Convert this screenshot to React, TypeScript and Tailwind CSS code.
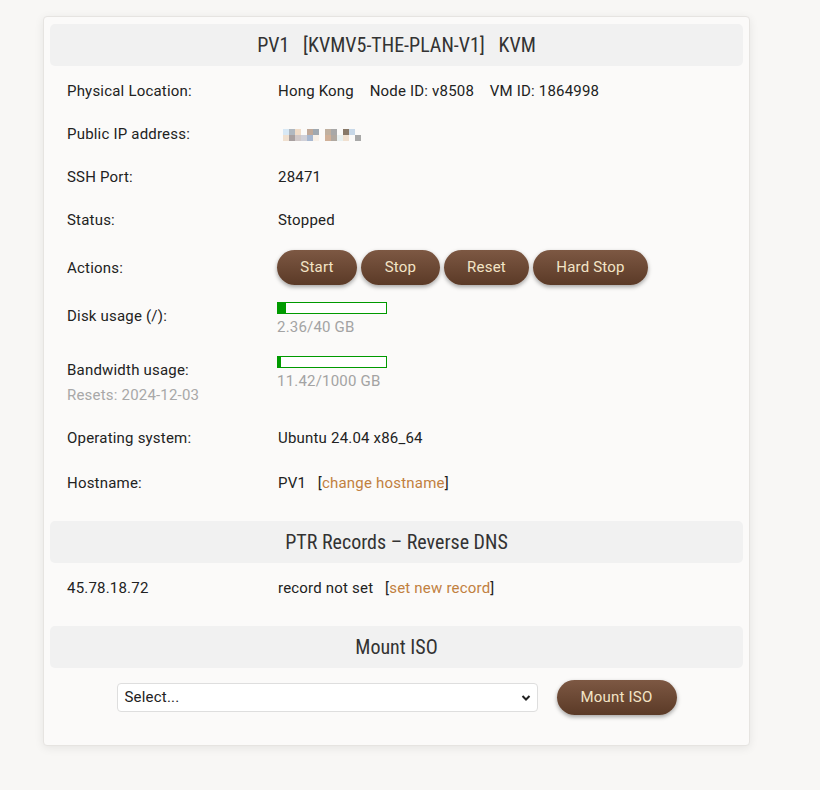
import React from "react";

const body = { fontFamily: "Roboto, 'Noto Sans', sans-serif" };
const cond = { fontFamily: "Roboto, 'DejaVu Sans Condensed', sans-serif", fontStretch: "82%" };

function Header({ children }: { children: React.ReactNode }) {
  return (
    <div className="h-[42px] bg-[#f1f1f1] rounded-[5px] flex items-center justify-center text-[20px] text-[#333] tracking-normal" style={cond}>
      {children}
    </div>
  );
}

function Btn({ label, w }: { label: string; w: string }) {
  return (
    <button
      className={`${w} h-[35px] rounded-full bg-gradient-to-b from-[#7d5843] to-[#5b3a27] text-[#f3e4c6] text-[15px] shadow-[0_2px_4px_rgba(0,0,0,0.35)] flex items-center justify-center`}
    >
      {label}
    </button>
  );
}

const ipRow1 = ["#d8e8f5", "#b0b8c0", "#f0dcc8", "transparent", "#c0a898", "#a0a8b0", "transparent", "#c0b0a0", "#a8a8a8", "transparent", "#887868", "#c8d8e8", "transparent"];
const ipRow2 = ["#f0e0d0", "#a8a0a0", "#d0c8c8", "#d0d0d8", "#a8b8d0", "#f8f0e8", "transparent", "#d0b098", "#b0a8a0", "#e8f0f0", "#f0e0d0", "transparent", "#a8a8a8"];

function Bar({ fill }: { fill: string }) {
  return (
    <div className="w-[110px] h-[12px] border border-[#009a00] bg-white">
      <div className={`h-full bg-[#009a00] ${fill}`} />
    </div>
  );
}

export default function App() {
  return (
    <div className="min-h-[790px] bg-[#f8f7f5] pt-[16px] pl-[43px]" style={body}>
      <div className="w-[707px] bg-[#fbfaf9] border border-[#e6e4e1] rounded-[4px] shadow-[0_2px_10px_rgba(0,0,0,0.08)] px-[6px] pt-[7px] pb-[30px] text-[15px] text-[#222] tracking-[0.2px]">
        <Header>
          <span className="whitespace-pre">PV1   [KVMV5-THE-PLAN-V1]   KVM</span>
        </Header>

        <div className="pl-[17px] pt-[4px]">
          <div className="flex h-[43px] items-center">
            <div className="w-[211px]">Physical Location:</div>
            <div className="whitespace-pre">Hong Kong    Node ID: v8508    VM ID: 1864998</div>
          </div>
          <div className="flex h-[43px] items-center">
            <div className="w-[211px]">Public IP address:</div>
            <div className="flex flex-col pl-[5px]">
              <div className="flex">
                {ipRow1.map((c, i) => (
                  <div key={i} className="w-[6px] h-[6px]" style={{ background: c }} />
                ))}
              </div>
              <div className="flex">
                {ipRow2.map((c, i) => (
                  <div key={i} className="w-[6px] h-[6px]" style={{ background: c }} />
                ))}
              </div>
            </div>
          </div>
          <div className="flex h-[43px] items-center">
            <div className="w-[211px]">SSH Port:</div>
            <div>28471</div>
          </div>
          <div className="flex h-[43px] items-center">
            <div className="w-[211px]">Status:</div>
            <div>Stopped</div>
          </div>
          <div className="flex h-[52px] items-center">
            <div className="w-[210px]">Actions:</div>
            <div className="flex gap-[4px] -mt-[2px]">
              <Btn label="Start" w="w-[80px]" />
              <Btn label="Stop" w="w-[79px]" />
              <Btn label="Reset" w="w-[85px]" />
              <Btn label="Hard Stop" w="w-[115px]" />
            </div>
          </div>
          <div className="flex h-[51px] items-start">
            <div className="w-[210px] pt-[12px] leading-[20px]">Disk usage (/):</div>
            <div className="pt-[8px]">
              <Bar fill="w-[8px]" />
              <div className="text-[#a3a3a3] leading-[24px] mt-[1px]">2.36/40 GB</div>
            </div>
          </div>
          <div className="flex h-[71px] items-start">
            <div className="w-[210px] pt-[15px] leading-[20px]">
              <div>Bandwidth usage:</div>
              <div className="text-[#a8a8a8] mt-[5px]">Resets: 2024-12-03</div>
            </div>
            <div className="pt-[11px]">
              <Bar fill="w-[3px]" />
              <div className="text-[#a3a3a3] leading-[24px] mt-[1px]">11.42/1000 GB</div>
            </div>
          </div>
          <div className="flex h-[44px] items-center">
            <div className="w-[211px]">Operating system:</div>
            <div>Ubuntu 24.04 x86_64</div>
          </div>
          <div className="flex h-[46px] items-center">
            <div className="w-[211px]">Hostname:</div>
            <div className="whitespace-pre">
              PV1   [<span className="text-[#c1803f]">change hostname</span>]
            </div>
          </div>
        </div>

        <div className="mt-[15px]">
          <Header>PTR Records – Reverse DNS</Header>
        </div>
        <div className="pl-[17px] pt-[2px] flex h-[49px] items-center">
          <div className="w-[211px]">45.78.18.72</div>
          <div className="whitespace-pre">
            record not set   [<span className="text-[#c1803f]">set new record</span>]
          </div>
        </div>

        <div className="mt-[14px]">
          <Header>Mount ISO</Header>
        </div>
        <div className="flex justify-center items-center gap-[19px] mt-[12px]">
          <div className="relative w-[421px] h-[29px] bg-white border border-[#dedede] rounded-[4px] flex items-center pl-[7px] text-[15px] text-[#222]">
            <span>Select...</span>
            <svg className="absolute right-[6px] top-[10px]" width="10" height="8" viewBox="0 0 10 8">
              <path d="M1.5 2 L5 5.5 L8.5 2" stroke="#222" strokeWidth="2" fill="none" />
            </svg>
          </div>
          <Btn label="Mount ISO" w="w-[120px]" />
        </div>
      </div>
    </div>
  );
}
